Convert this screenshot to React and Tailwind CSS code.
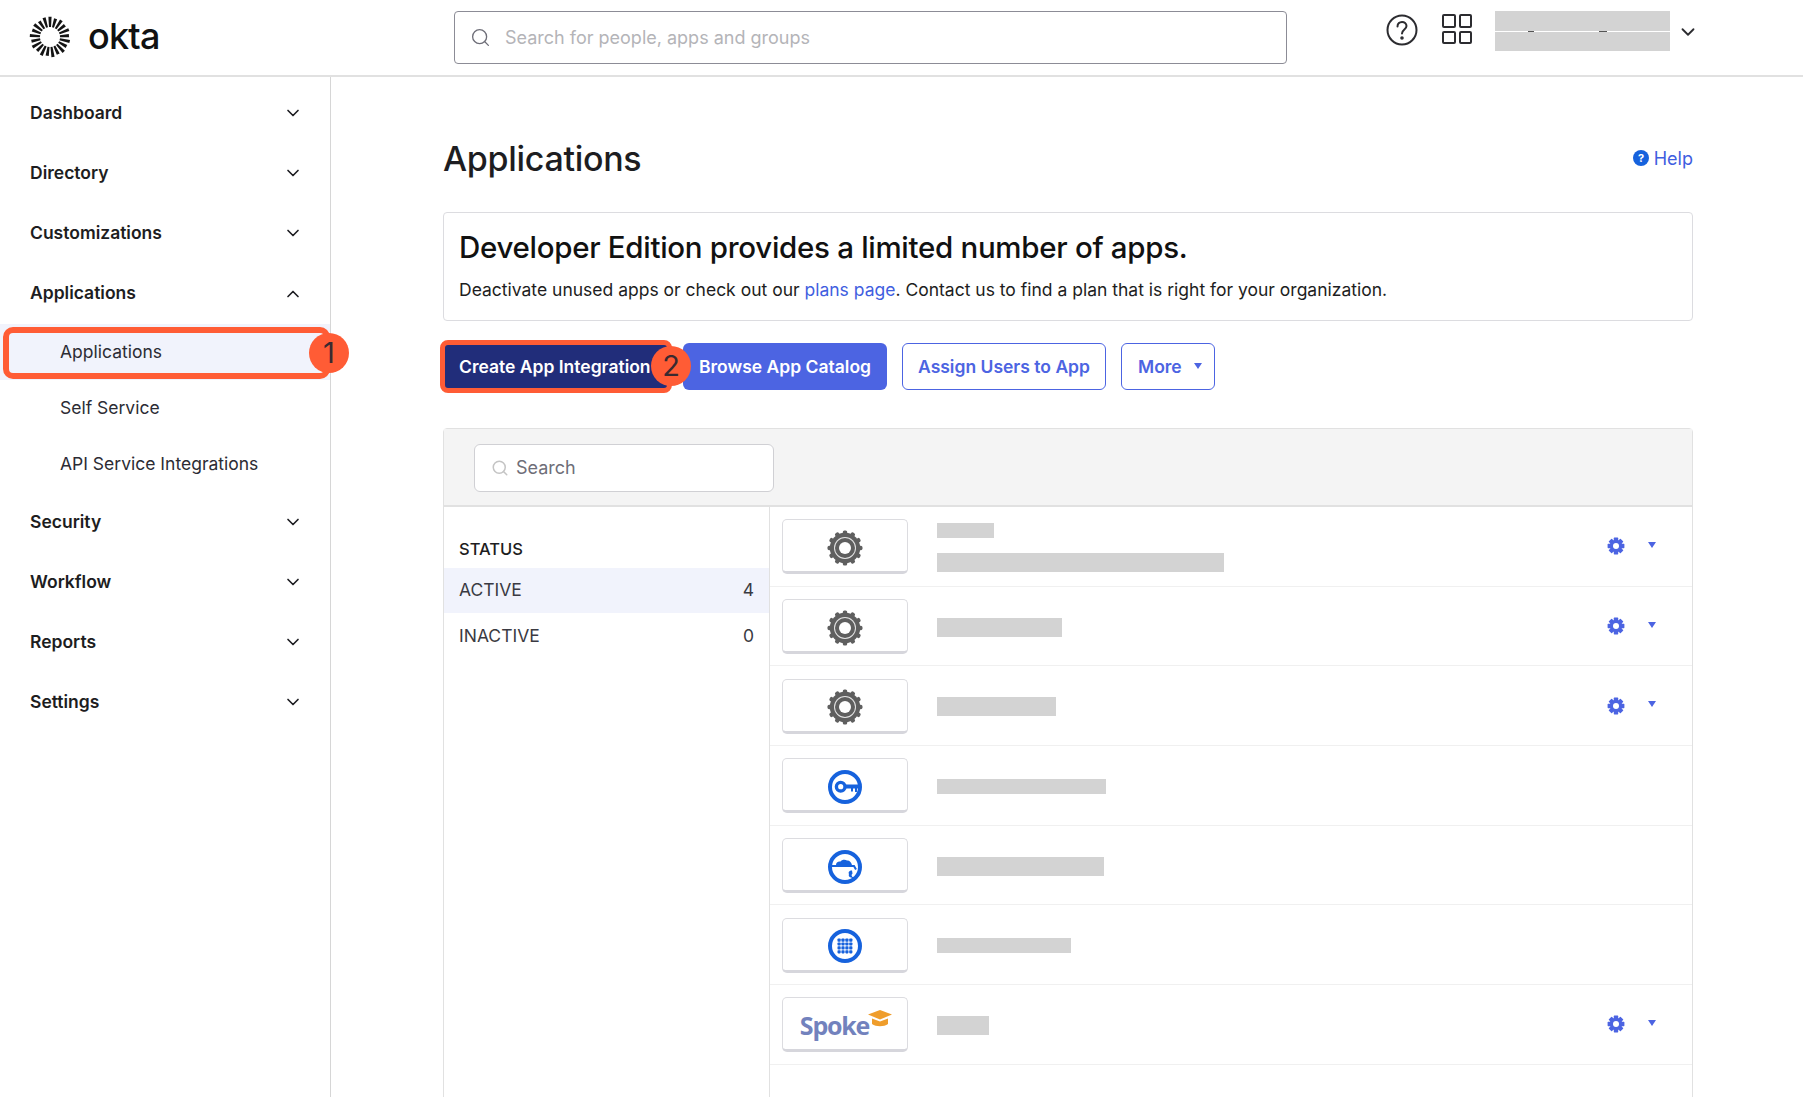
import React from "react";
import { ChevronDown, ChevronUp, Search } from "lucide-react";

const navTop = ["Dashboard", "Directory", "Customizations"];
const navBottom = ["Security", "Workflow", "Reports", "Settings"];

const rows = [
  { icon: "gear", bars: [57, 287], action: true },
  { icon: "gear", bars: [125], action: true },
  { icon: "gear", bars: [119], action: true },
  { icon: "key", bars: [169], thin: true },
  { icon: "lock", bars: [167] },
  { icon: "dots", bars: [134], thin: true },
  { icon: "spoke", bars: [52], action: true },
];

function Gear() {
  const teeth = Array.from({ length: 12 }, (_, i) => i * 30);
  return (
    <svg width="36" height="36" viewBox="0 0 36 36">
      {teeth.map((a) => (
        <rect key={a} x="15.800" y="0.500" width="4.400" height="5" rx="1.600" fill="#5f5f5f" transform={`rotate(${a} 18 18)`} />
      ))}
      <circle cx="18" cy="18" r="15.200" fill="#5f5f5f" />
      <circle cx="18" cy="18" r="11" fill="#e4e4e4" />
      <circle cx="18" cy="18" r="10" fill="#5f5f5f" />
      <circle cx="18" cy="18" r="6" fill="white" />
    </svg>
  );
}

function ActionGear() {
  const teeth = [0, 45, 90, 135, 180, 225, 270, 315];
  return (
    <svg width="18" height="18" viewBox="0 0 18 18">
      {teeth.map((a) => (
        <rect key={a} x="6.800" y="0.600" width="4.400" height="4" rx="0.600" fill="#4c64e2" transform={`rotate(${a} 9 9)`} />
      ))}
      <circle cx="9" cy="9" r="6.200" fill="#4c64e2" />
      <circle cx="9" cy="9" r="3" fill="white" />
    </svg>
  );
}

function KeyIcon() {
  return (
    <svg width="36" height="36" viewBox="0 0 36 36" fill="none">
      <circle cx="18" cy="18" r="15" stroke="#1662dd" strokeWidth="4" />
      <circle cx="13.700" cy="17.700" r="4.300" stroke="#1662dd" strokeWidth="3.400" />
      <path d="M18 15.500h13v4h-1v3.500h-2v-3.500h-2v3h-2v-3h-6z" fill="#1662dd" />
    </svg>
  );
}

function LockIcon() {
  return (
    <svg width="36" height="36" viewBox="0 0 36 36" fill="none">
      <circle cx="18" cy="18" r="15" stroke="#1662dd" strokeWidth="4" />
      <path d="M9 16c0-2.500 2-4 4.500-3.500 1-2 5-2.500 6.500-1 2-.5 4 1 5 4.500z" fill="#1662dd" />
      <path d="M3 17h24l2 3.500" stroke="#1662dd" strokeWidth="2" />
      <path d="M25 21.500c-3 0-4 2-3 3.500-1 2 1 4 3.500 3.500l-1-2.500 1-1.500z" fill="#1662dd" />
      <path d="M25.500 28l1 4" stroke="#1662dd" strokeWidth="2" />
    </svg>
  );
}

function DotsIcon() {
  const cells = [];
  for (let r = 0; r < 4; r++) for (let c = 0; c < 4; c++) cells.push([c, r]);
  return (
    <svg width="36" height="36" viewBox="0 0 36 36" fill="none">
      <circle cx="18" cy="18" r="15" stroke="#1662dd" strokeWidth="4" />
      {cells.map(([c, r]) => (
        <rect key={`${c}-${r}`} x={10.500 + c * 3.900} y={10.500 + r * 3.900} width="3.200" height="3.200" rx="0.800" fill="#1662dd" />
      ))}
    </svg>
  );
}

function SpokeLogo() {
  return (
    <div className="flex items-start mt-[2px] ml-[2px]">
      <span className="font-['Open_Sans',sans-serif] text-[25px] leading-[34px] font-bold tracking-[-1.200px] text-[#7282bd]">Spoke</span>
      <svg width="24" height="19" viewBox="0 0 24 19" className="mt-[1px] -ml-[1px]">
        <path d="M0 5.500 12 1l12 4.500-12 5z" fill="#ef9d2b" />
        <path d="M4 9.500v5.500c4 3 12 3 16 0V9.500l-8 3z" fill="#ef9d2b" />
      </svg>
    </div>
  );
}

function AppIcon({ icon }) {
  if (icon === "gear") return <div className="mt-[4px]"><Gear /></div>;
  if (icon === "key") return <div className="mt-[4px]"><KeyIcon /></div>;
  if (icon === "lock") return <div className="mt-[4px]"><LockIcon /></div>;
  if (icon === "dots") return <div className="mt-[4px]"><DotsIcon /></div>;
  return <SpokeLogo />;
}

function Caret({ className }) {
  return (
    <svg width="8" height="6" viewBox="0 0 8 6" className={className}>
      <path d="M0 0h8L4 6z" fill="#4c64e2" />
    </svg>
  );
}

function OktaLogo() {
  const rays = Array.from({ length: 21 }, (_, i) => (i * 360) / 21);
  return (
    <svg width="42" height="42" viewBox="0 0 42 42">
      {rays.map((a, i) => (
        <path key={a} d={i % 2 ? "M19.400 2h3.200l-.6 9h-2z" : "M19.400 .8h3.200l-.6 10.200h-2z"} fill="#141414" transform={`rotate(${a} 21 21)`} />
      ))}
    </svg>
  );
}

function NavItem({ label, open }) {
  return (
    <div className={`${open ? "h-[61px]" : "h-[60px]"} flex items-center justify-between pl-[30px] pr-[27px] text-[17.500px] font-semibold text-[#1d1d21]`}>
      <span>{label}</span>
      {open ? <ChevronUp size={20} strokeWidth={2} /> : <ChevronDown size={20} strokeWidth={2} />}
    </div>
  );
}

export default function App() {
  return (
    <div className="h-[1097px] overflow-hidden bg-white font-['Inter',sans-serif] text-[#1d1d21]">
      <header className="h-[77px] border-b-2 border-[#e1e1e1] flex items-start">
        <div className="w-[454px] h-full flex items-start pl-[29px] pt-[16px] gap-[17px]">
          <OktaLogo />
          <span className="text-[36px] leading-[40px] font-medium tracking-[-0.800px] text-[#111]">okta</span>
        </div>
        <div className="w-[833px] h-[53px] mt-[11px] border border-[#8c8c96] rounded-[4px] flex items-center pl-[15px] gap-[14px] text-[18px] text-[#b4b4b8]">
          <Search size={21} strokeWidth={1.500} className="text-[#6e6e78]" />
          <span>Search for people, apps and groups</span>
        </div>
        <div className="flex items-start ml-[99px] mt-[14px]">
          <svg width="32" height="32" viewBox="0 0 32 32" fill="none" stroke="#2c2c30" strokeWidth="2">
            <circle cx="16" cy="16" r="14.500" />
            <path d="M11.500 12.500c0-6 9-6 9-0.500 0 3.500-4.500 3.500-4.500 7.500" strokeLinecap="round" />
            <circle cx="16" cy="24" r="0.800" fill="#2c2c30" />
          </svg>
          <div className="ml-[24px] grid grid-cols-2 gap-[3px] w-[30px]">
            {[0, 1, 2, 3].map((i) => (
              <div key={i} className="h-[13.500px] border-2 border-[#2c2c30] rounded-[2px]" />
            ))}
          </div>
          <div className="ml-[23px] -mt-[3px] w-[175px] flex flex-col">
            <div className="h-[20px] bg-[#d3d3d3]" />
            <div className="h-[1px] flex">
              <div className="ml-[33px] w-[6px] bg-[#555]" />
              <div className="ml-[65px] w-[8px] bg-[#555]" />
            </div>
            <div className="h-[19px] bg-[#d3d3d3]" />
          </div>
          <ChevronDown size={22} strokeWidth={2} className="ml-[7px] mt-[7px] text-[#2c2c30]" />
        </div>
      </header>

      <div className="flex h-[1020px]">
        <aside className="w-[331px] shrink-0 border-r border-[#d6d6d6] pt-[6px]">
          {navTop.map((n) => <NavItem key={n} label={n} />)}
          <NavItem label="Applications" open />
          <div className="relative h-[56px] bg-[#f1f3fc] flex items-center pl-[60px] text-[17.500px] text-[#2c2c34]">
            Applications
            <div className="absolute left-[3px] right-0 top-[3px] bottom-[1px] border-[6px] border-[#ff5c35] rounded-[10px]" />
            <div className="absolute left-[309px] top-[9px] w-[40px] h-[40px] rounded-full bg-[#ff5c35] flex items-center justify-center text-[29px] text-[#3a2a30] z-10">1</div>
          </div>
          <div className="h-[56px] flex items-center pl-[60px] text-[17.500px] text-[#2c2c34]">Self Service</div>
          <div className="h-[56px] flex items-center pl-[60px] text-[17.500px] text-[#2c2c34]">API Service Integrations</div>
          {navBottom.map((n) => <NavItem key={n} label={n} />)}
        </aside>

        <main className="flex-1 pl-[112px] pr-[110px] min-w-0">
          <div className="flex items-center justify-between h-[135px] pt-[28px]">
            <h1 className="text-[34px] font-medium tracking-[-0.300px] text-[#1d1d21]">Applications</h1>
            <div className="flex items-center gap-[5px] text-[18px] text-[#3f5ee0]">
              <svg width="16" height="16" viewBox="0 0 16 16" className="-mt-[2px]">
                <circle cx="8" cy="8" r="8" fill="#1662dd" />
                <text x="8" y="12" textAnchor="middle" fontSize="11" fontWeight="700" fill="white">?</text>
              </svg>
              Help
            </div>
          </div>

          <div className="h-[109px] border border-[#dcdce0] rounded-[4px] px-[15px] pt-[17px]">
            <div className="text-[29.500px] leading-[34px] font-medium tracking-[-0.300px] text-[#111]">Developer Edition provides a limited number of apps.</div>
            <div className="mt-[13px] text-[17.500px] leading-[26px] text-[#1d1d21]">
              Deactivate unused apps or check out our <span className="text-[#3f5ee0]">plans page</span>. Contact us to find a plan that is right for your organization.
            </div>
          </div>

          <div className="mt-[21px] flex items-center h-[48px] text-[17.500px] font-semibold">
            <div className="relative w-[243px] h-[48px] flex items-center shrink-0 -ml-[3px]">
              <div className="w-[232px] h-[53px] border-[5px] border-[#ff5c35] rounded-[8px] bg-[#212d7a] flex items-center pl-[14px] pt-[2px] text-white whitespace-nowrap">Create App Integration</div>
              <div className="absolute left-[211px] top-[4px] w-[40px] h-[40px] rounded-full bg-[#ff5c35] flex items-center justify-center text-[29px] font-normal text-[#3a2a30]">2</div>
            </div>
            <div className="h-[47px] w-[204px] bg-[#4c64e2] rounded-[6px] flex items-center justify-center pt-[2px] text-white">Browse App Catalog</div>
            <div className="ml-[15px] h-[47px] w-[204px] border border-[#4c64e2] rounded-[6px] flex items-center justify-center pt-[2px] text-[#4c64e2]">Assign Users to App</div>
            <div className="ml-[15px] h-[47px] w-[94px] border border-[#4c64e2] rounded-[6px] flex items-center pl-[16px] pt-[2px] text-[#4c64e2]">
              More
              <Caret className="ml-[12px] -mt-[2px]" />
            </div>
          </div>

          <div className="mt-[38px] border border-[#e1e1e1] rounded-t-[4px] h-[700px]">
            <div className="h-[78px] bg-[#f4f4f4] border-b-2 border-[#e1e1e1] pl-[30px] pt-[15px]">
              <div className="w-[300px] h-[48px] bg-white border border-[#d0d0d4] rounded-[6px] flex items-center pl-[16px] gap-[7px] text-[18px] text-[#6e6e78]">
                <Search size={18} strokeWidth={2} className="text-[#c4c4c4]" />
                <span className="-mt-[1px]">Search</span>
              </div>
            </div>
            <div className="flex h-[620px]">
              <div className="w-[326px] shrink-0 border-r border-[#e1e1e1] pt-[24px] text-[17.500px]">
                <div className="px-[15px] h-[37px] flex items-center font-medium text-[16.500px] text-[#1d1d21]">STATUS</div>
                <div className="h-[45px] px-[15px] bg-[#f1f3fc] flex items-center justify-between text-[#3a3a42]"><span>ACTIVE</span><span>4</span></div>
                <div className="h-[46px] px-[15px] flex items-center justify-between text-[#3a3a42]"><span>INACTIVE</span><span>0</span></div>
              </div>
              <div className="flex-1 min-w-0">
                {rows.map((row, i) => (
                  <div key={i} className="h-[79.700px] border-b border-[#f0f0f0] flex items-center pl-[12px]">
                    <div className="w-[126px] h-[55px] shrink-0 mt-[1px] bg-white border border-[#dcdce0] border-b-[3px] border-b-[#d6d6dc] rounded-[5px] flex items-center justify-center">
                      <AppIcon icon={row.icon} />
                    </div>
                    <div className="ml-[29px] flex-1 flex flex-col gap-[15px] mt-[2px]">
                      {row.bars.map((w, j) => (
                        <div key={j} className={row.thin || (row.bars.length > 1 && j === 0) ? "h-[15px] bg-[#d3d3d3]" : "h-[19px] bg-[#d3d3d3]"} style={{ width: w }} />
                      ))}
                    </div>
                    {row.action && (
                      <div className="flex items-center mr-[36px]">
                        <ActionGear />
                        <Caret className="ml-[23px] -mt-[3px]" />
                      </div>
                    )}
                  </div>
                ))}
              </div>
            </div>
          </div>
        </main>
      </div>
    </div>
  );
}
